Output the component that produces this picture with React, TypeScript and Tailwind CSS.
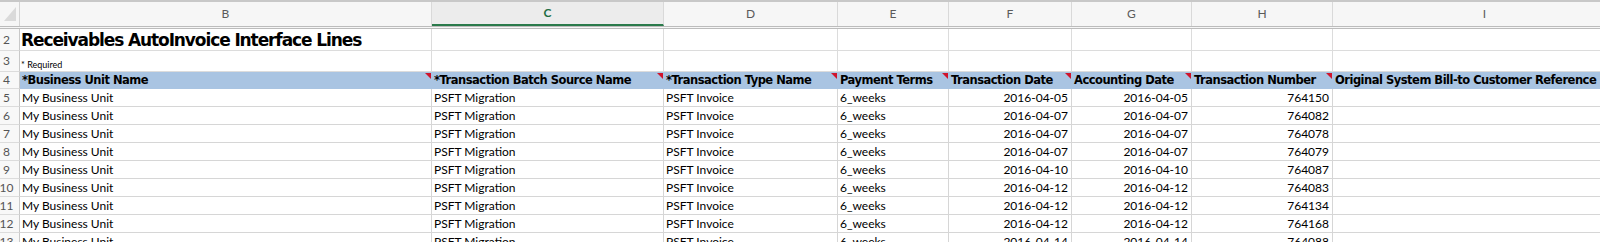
import React from "react";

const DATA = "font-['Lato','Liberation_Sans',sans-serif]";
const HEAD = "font-['DejaVu_Sans','Liberation_Sans',sans-serif]";

type Col = { w: string; letter: string; head: string; tri: boolean; align: "l" | "r" };

const cols: Col[] = [
  { w: "w-[412px]", letter: "B", head: "*Business Unit Name", tri: true, align: "l" },
  { w: "w-[232px]", letter: "C", head: "*Transaction Batch Source Name", tri: true, align: "l" },
  { w: "w-[174px]", letter: "D", head: "*Transaction Type Name", tri: true, align: "l" },
  { w: "w-[111px]", letter: "E", head: "Payment Terms", tri: true, align: "l" },
  { w: "w-[123px]", letter: "F", head: "Transaction Date", tri: true, align: "r" },
  { w: "w-[120px]", letter: "G", head: "Accounting Date", tri: true, align: "r" },
  { w: "w-[141px]", letter: "H", head: "Transaction Number", tri: true, align: "r" },
  { w: "w-[304px]", letter: "I", head: "Original System Bill-to Customer Reference", tri: false, align: "l" },
];

const rows: [number, string, string, string][] = [
  [5, "2016-04-05", "2016-04-05", "764150"],
  [6, "2016-04-07", "2016-04-07", "764082"],
  [7, "2016-04-07", "2016-04-07", "764078"],
  [8, "2016-04-07", "2016-04-07", "764079"],
  [9, "2016-04-10", "2016-04-10", "764087"],
  [10, "2016-04-12", "2016-04-12", "764083"],
  [11, "2016-04-12", "2016-04-12", "764134"],
  [12, "2016-04-12", "2016-04-12", "764168"],
  [13, "2016-04-14", "2016-04-14", "764088"],
];

function RowNum({ n, h }: { n?: number; h: string }) {
  return (
    <div
      className={`w-[20px] shrink-0 ${h} flex items-center justify-center pr-[6px] bg-[#f8f8f8] border-r border-r-[#c9c9c9] border-b border-b-[#dcdcdc] text-[12px] text-[#555] ${DATA}`}
    >
      {n}
    </div>
  );
}

export default function App() {
  return (
    <div className="w-[1600px] h-[242px] overflow-hidden bg-white text-black">
      {/* column header */}
      <div className="flex h-[29px] border-t-2 border-t-[#c8c8c8] border-b-[3px] border-double border-b-[#bcbcbc] bg-[#f6f6f6]">
        <div className="w-[20px] shrink-0 h-full border-r border-r-[#d4d4d4] flex items-end justify-end">
          <svg width="19" height="24" viewBox="0 0 19 24" className="block">
            <polygon points="4,19 16,5 16,19" fill="#dadada" />
          </svg>
        </div>
        {cols.map((c) => (
          <div
            key={c.letter}
            className={`${c.w} shrink-0 h-full flex items-center justify-center border-r border-r-[#d9d9d9] text-[12px] ${DATA} ${
              c.letter === "C"
                ? "border-b-2 border-b-[#2b7a4b] text-[#1f6e43] font-bold bg-[#ececec]"
                : "text-[#5a5a5a]"
            }`}
          >
            {c.letter}
          </div>
        ))}
      </div>

      {/* row 2 title */}
      <div className="flex h-[22px]">
        <RowNum n={2} h="h-[22px]" />
        {cols.map((c, i) => (
          <div
            key={c.letter}
            className={`${c.w} shrink-0 h-full flex items-center border-r border-b border-[#dcdcdc] overflow-visible whitespace-nowrap`}
          >
            {i === 0 && (
              <span className={`pl-[1px] pt-[2px] text-[17px] font-bold tracking-[-1.1px] ${HEAD}`}>
                Receivables AutoInvoice Interface Lines
              </span>
            )}
          </div>
        ))}
      </div>

      {/* row 3 */}
      <div className="flex h-[21px]">
        <RowNum n={3} h="h-[21px]" />
        {cols.map((c, i) => (
          <div
            key={c.letter}
            className={`${c.w} shrink-0 h-full flex items-end pb-[2px] border-r border-b border-[#dcdcdc] whitespace-nowrap`}
          >
            {i === 0 && <span className={`pl-[1px] text-[9px] leading-none ${DATA}`}>* Required</span>}
          </div>
        ))}
      </div>

      {/* row 4 headers */}
      <div className="flex h-[17px]">
        <RowNum n={4} h="h-[17px]" />
        {cols.map((c) => (
          <div
            key={c.letter}
            className={`${c.w} shrink-0 h-full relative flex items-center bg-[#a9c4e2] whitespace-nowrap overflow-hidden`}
          >
            <span className={`pl-[2px] pt-[1px] text-[11.5px] font-bold tracking-[-0.5px] ${HEAD}`}>{c.head}</span>
            {c.tri && (
              <span className="absolute top-[1px] right-[1px] w-0 h-0 border-t-[6px] border-t-[#d0142c] border-l-[6px] border-l-transparent" />
            )}
          </div>
        ))}
      </div>

      {/* data rows */}
      {rows.map(([n, td, ad, num]) => {
        const vals = ["My Business Unit", "PSFT Migration", "PSFT Invoice", "6_weeks", td, ad, num, ""];
        return (
          <div key={n} className="flex h-[18px]">
            <RowNum n={n} h="h-[18px]" />
            {cols.map((c, i) => (
              <div
                key={c.letter}
                className={`${c.w} shrink-0 h-full flex items-center border-r border-b border-[#d6d6d6] whitespace-nowrap overflow-hidden text-[12px] ${DATA} ${
                  c.align === "r" ? "justify-end pr-[3px]" : "justify-start pl-[2px]"
                }`}
              >
                {vals[i]}
              </div>
            ))}
          </div>
        );
      })}
    </div>
  );
}
